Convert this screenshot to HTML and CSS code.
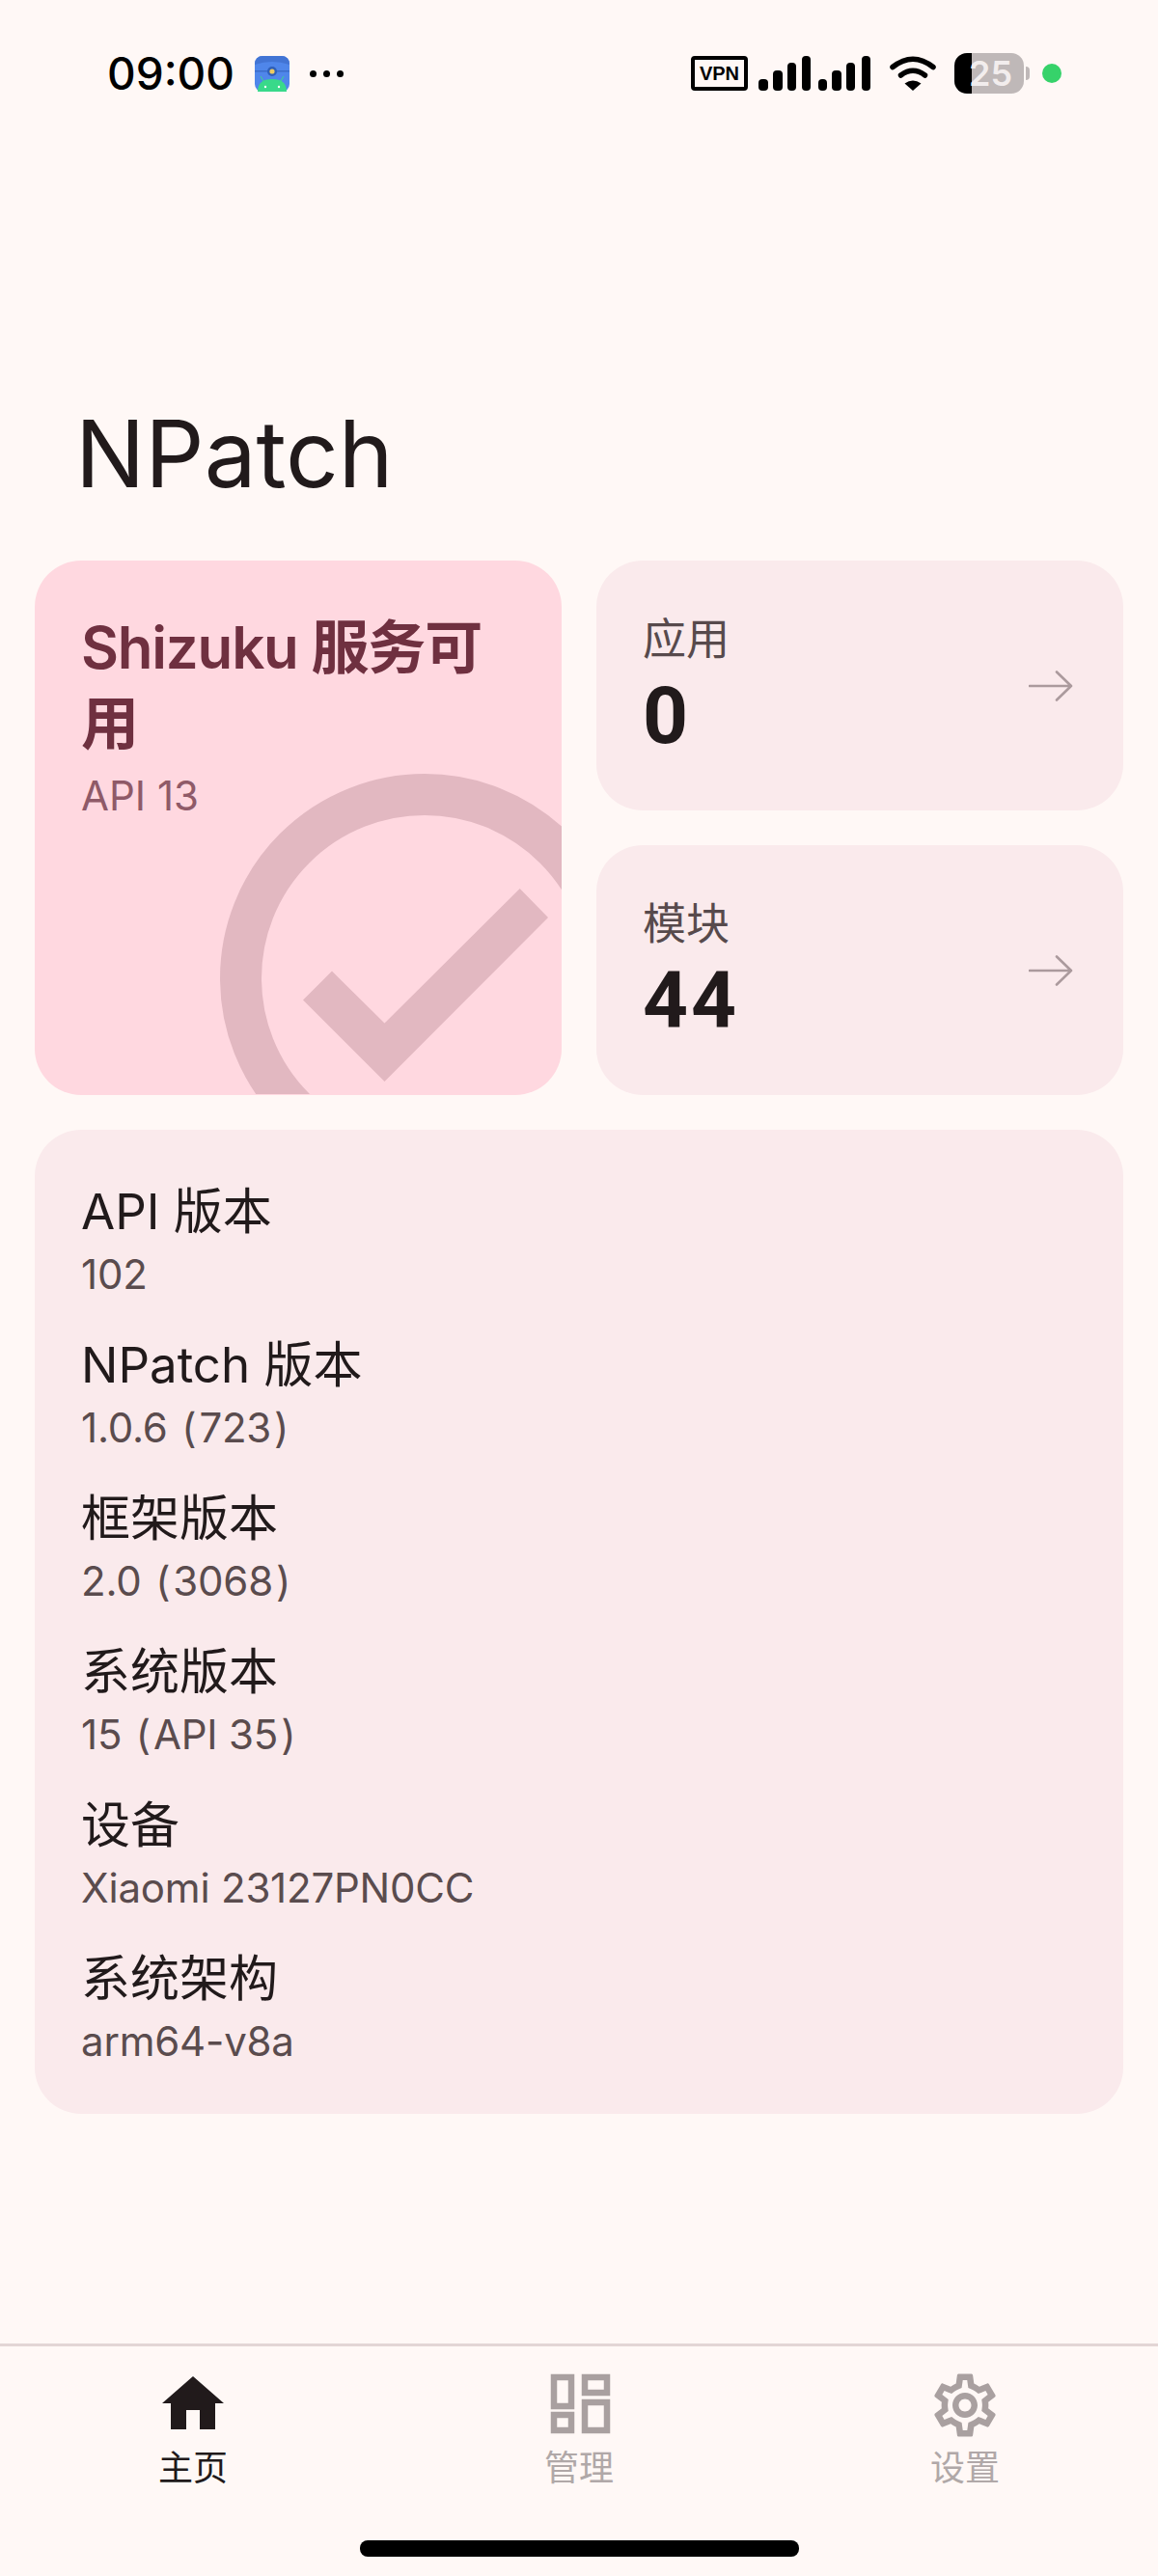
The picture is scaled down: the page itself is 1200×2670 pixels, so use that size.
FILE: index.html
```html
<!DOCTYPE html>
<html lang="zh-CN">
<head>
<meta charset="utf-8">
<title>NPatch</title>
<link rel="stylesheet" href="styles.css">
</head>
<body>
<div class="app">
  <header class="status">
    <div class="status-left">
      <span class="time">09:00</span>
      <svg class="app-icon" viewBox="0 0 36 37">
        <rect width="36" height="37" rx="8" fill="#4f86ea"/>
        <path d="M0 8a8 8 0 0 1 8-8h20a8 8 0 0 1 8 8v1q-18-6-36 0z" fill="#4274d4"/>
        <rect y="15" width="36" height="1.5" fill="#3c6cc8"/>
        <circle cx="18" cy="16" r="5" fill="#2f5fb8"/>
        <circle cx="18" cy="16" r="2.6" fill="#eccb62"/>
        <path d="M3 37q0-13 15-13t15 13z" fill="#39d98a"/>
        <path d="M9 26l-3-5M27 26l3-5" stroke="#39d98a" stroke-width="1"/>
        <circle cx="11" cy="32" r="1.2" fill="#fff"/><circle cx="25" cy="32" r="1.2" fill="#fff"/>
      </svg>
      <span class="dots"><i></i><i></i><i></i></span>
    </div>
    <div class="status-right">
      <span class="vpn">VPN</span>
      <svg class="signal" viewBox="0 0 116 36">
        <g fill="#000">
          <rect x="0" y="24" width="10" height="12" rx="4"/>
          <rect x="15" y="15" width="10" height="21" rx="4"/>
          <rect x="30" y="7" width="9" height="29" rx="4"/>
          <rect x="45" y="0" width="9" height="36" rx="4"/>
          <rect x="62" y="24" width="9" height="12" rx="4"/>
          <rect x="76" y="15" width="10" height="21" rx="4"/>
          <rect x="91" y="7" width="9" height="29" rx="4"/>
          <rect x="107" y="0" width="9" height="36" rx="4"/>
        </g>
      </svg>
      <svg class="wifi" viewBox="0 0 48 36">
        <g fill="none" stroke="#000" stroke-width="5.5" stroke-linecap="round">
          <path d="M3 11.5q21-16.500 42 0"/>
          <path d="M11.500 20q12.500-9.500 25 0"/>
        </g>
        <path d="M15.500 28.500q8.500-6 17 0l-8.500 7.500z" fill="#000"/>
      </svg>
      <div class="battery">
        <span class="battery-fill"></span>
        <span class="battery-num">25</span>
        <span class="battery-cap"></span>
      </div>
      <span class="privacy"></span>
    </div>
  </header>

  <h1 class="title">NPatch</h1>

  <main class="content">
    <section class="top">
      <article class="card-status">
        <svg class="check-bg" viewBox="0 0 546 553" preserveAspectRatio="none">
          <circle cx="404" cy="433" r="190.500" fill="none" stroke="#e2b8c1" stroke-width="43"/>
          <path d="M278 455.500L308 425.600L362.500 479.600L502.700 340L532 370L362.500 540z" fill="#e2b8c1"/>
        </svg>
        <h2 class="status-title">Shizuku 服务可用</h2>
        <p class="status-sub">API 13</p>
      </article>
      <div class="stats">
        <a class="stat">
          <div class="stat-text">
            <span class="stat-label">应用</span>
            <strong class="stat-num">0</strong>
          </div>
          <svg class="arrow" viewBox="0 0 46 32"><path d="M1 16H44M29 1.500L44 16L29 30.500" fill="none" stroke="#ab9a9d" stroke-width="2.600" stroke-linecap="round" stroke-linejoin="round"/></svg>
        </a>
        <a class="stat">
          <div class="stat-text">
            <span class="stat-label">模块</span>
            <strong class="stat-num">44</strong>
          </div>
          <svg class="arrow" viewBox="0 0 46 32"><path d="M1 16H44M29 1.500L44 16L29 30.500" fill="none" stroke="#ab9a9d" stroke-width="2.600" stroke-linecap="round" stroke-linejoin="round"/></svg>
        </a>
      </div>
    </section>

    <section class="info">
      <div class="info-row"><div class="info-key">API 版本</div><div class="info-val">102</div></div>
      <div class="info-row"><div class="info-key">NPatch 版本</div><div class="info-val">1.0.6 <span class="p">(</span>723<span class="p">)</span></div></div>
      <div class="info-row"><div class="info-key">框架版本</div><div class="info-val">2.0 <span class="p">(</span>3068<span class="p">)</span></div></div>
      <div class="info-row"><div class="info-key">系统版本</div><div class="info-val">15 <span class="p">(</span>API 35<span class="p">)</span></div></div>
      <div class="info-row"><div class="info-key">设备</div><div class="info-val">Xiaomi 23127PN0CC</div></div>
      <div class="info-row"><div class="info-key">系统架构</div><div class="info-val">arm64-v8a</div></div>
    </section>
  </main>

  <nav class="nav">
    <a class="nav-item active">
      <svg class="nav-icon" viewBox="0 0 66 66"><path d="M33 3L65 31H56V58H40V38H26V58H10V31H1z" fill="#211a1b"/></svg>
      <span>主页</span>
    </a>
    <a class="nav-item">
      <svg class="nav-icon" viewBox="0 0 66 66"><g fill="none" stroke="#a9a0a0" stroke-width="6.500"><rect x="7" y="4" width="18" height="30"/><rect x="39" y="4" width="23" height="16"/><rect x="7" y="43" width="18" height="16"/><rect x="39" y="30" width="23" height="29"/></g></svg>
      <span>管理</span>
    </a>
    <a class="nav-item">
      <svg class="nav-icon gear" viewBox="0 0 24 24"><path fill="#a9a0a0" d="M19.430 12.980c.04-.32.07-.64.07-.98 0-.34-.03-.66-.07-.98l2.110-1.650c.19-.15.24-.42.12-.64l-2-3.460c-.09-.16-.26-.25-.44-.25-.06 0-.12.01-.17.03l-2.490 1c-.52-.4-1.080-.73-1.690-.98l-.38-2.650C14.460 2.180 14.250 2 14 2h-4c-.25 0-.46.18-.49.42l-.38 2.650c-.61.25-1.170.59-1.690.98l-2.490-1c-.06-.02-.12-.03-.18-.03-.17 0-.34.09-.43.25l-2 3.460c-.13.22-.07.49.12.64l2.110 1.650c-.04.32-.07.65-.07.98 0 .33.03.66.07.98l-2.110 1.650c-.19.15-.24.42-.12.64l2 3.460c.09.16.26.25.44.25.06 0 .12-.01.17-.03l2.490-1c.52.4 1.080.73 1.690.98l.38 2.650c.03.24.24.42.49.42h4c.25 0 .46-.18.49-.42l.38-2.650c.61-.25 1.170-.59 1.690-.98l2.490 1c.06.02.12.03.18.03.17 0 .34-.09.43-.25l2-3.460c.12-.22.07-.49-.12-.64l-2.110-1.650zm-1.980-1.710c.04.31.05.52.05.73 0 .21-.02.43-.05.73l-.14 1.130.89.7 1.080.84-.7 1.210-1.270-.51-1.040-.42-.9.68c-.43.32-.84.56-1.250.73l-1.060.43-.16 1.130-.2 1.350h-1.400l-.19-1.350-.16-1.130-1.060-.43c-.43-.18-.83-.41-1.230-.71l-.91-.7-1.060.43-1.270.51-.7-1.210 1.080-.84.89-.7-.14-1.130c-.03-.31-.05-.54-.05-.74s.02-.43.05-.73l.14-1.130-.89-.7-1.080-.84.7-1.210 1.270.51 1.040.42.9-.68c.43-.32.84-.56 1.250-.73l1.060-.43.16-1.130.2-1.350h1.390l.19 1.350.16 1.130 1.060.43c.43.18.83.41 1.230.71l.91.7 1.060-.43 1.270-.51.7 1.210-1.070.85-.89.7.14 1.130zM12 8c-2.210 0-4 1.790-4 4s1.790 4 4 4 4-1.790 4-4-1.790-4-4-4zm0 6c-1.100 0-2-.9-2-2s.9-2 2-2 2 .9 2 2-.9 2-2 2z"/></svg>
      <span>设置</span>
    </a>
  </nav>
  <div class="gesture"><span class="gesture-bar"></span></div>
</div>
</body>
</html>
```
FILE: styles.css
```css
* { box-sizing: border-box; margin: 0; padding: 0; }
html, body { width: 1200px; height: 2670px; }
body {
  background: #fff8f6;
  color: #211a1b;
  font-family: Inter, "Noto Sans CJK SC", sans-serif;
  overflow: hidden;
}
.app { display: flex; flex-direction: column; height: 2670px; }

.status {
  display: flex;
  justify-content: space-between;
  align-items: center;
  height: 56px;
  margin-top: 48px;
  padding: 0 100px 0 111px;
}
.status-left, .status-right { display: flex; align-items: center; }
.time { font-size: 46px; font-weight: 500; color: #000; width: 153px; }
.app-icon { width: 36px; height: 37px; }
.dots { display: flex; gap: 7px; margin-left: 21px; }
.dots i { width: 7px; height: 7px; border-radius: 50%; background: #000; }
.vpn {
  width: 59px; height: 36px;
  border: 4px solid #000; border-radius: 4px;
  font: 700 20px/28px "Liberation Sans", sans-serif;
  text-align: center; color: #000;
}
.signal { width: 116px; height: 36px; margin-left: 11px; }
.wifi { width: 48px; height: 36px; margin-left: 20px; }
.battery {
  position: relative; width: 78px; height: 42px; margin-left: 19px;
  display: flex; align-items: center;
}
.battery-fill {
  width: 72px; height: 42px; border-radius: 13px;
  background: linear-gradient(90deg, #000 0 25%, #bfb8b8 25%);
}
.battery-num {
  position: absolute; left: 15px; top: 0;
  font: 600 36px/42px Inter, sans-serif; color: #f2eded;
}
.battery-cap { width: 4px; height: 14px; margin-left: 2px; border-radius: 0 4px 4px 0; background: #bfb8b8; }
.privacy { width: 20px; height: 20px; border-radius: 50%; background: #36d26a; margin-left: 13px; }

.title {
  margin: 308px 0 53px 0;
  padding: 0 0 0 78px;
  font-size: 96px; font-weight: 400; line-height: 116px;
  color: #211a1b;
}
.content { flex: 1; padding: 0 36px; }
.top { display: grid; grid-template-columns: 546px 546px; gap: 36px; }

.card-status {
  position: relative; overflow: hidden;
  height: 554px;
  background: #ffd8e0;
  border-radius: 48px;
  padding: 51px 48px;
}
.check-bg { position: absolute; left: 0; top: 0; width: 546px; height: 553px; }
.status-title {
  position: relative;
  font-size: 60px; font-weight: 600; line-height: 79px;
  letter-spacing: -1.2px;
  color: #6f3040;
}
.status-sub {
  position: relative;
  margin-top: 5px;
  font-size: 42px; line-height: 60px; color: #8f5a68;
}
.stats { display: flex; flex-direction: column; gap: 36px; }
.stat {
  flex: 1;
  display: flex; align-items: center; justify-content: space-between;
  background: #faeaec;
  border-radius: 48px;
  padding: 0 52px 0 48px;
}
.stat-text { display: flex; flex-direction: column; }
.stat-label { font-size: 45px; line-height: 60px; color: #574a4c; position: relative; bottom: 2px; }
.stat-num {
  margin-top: 2px;
  font-family: Roboto, sans-serif;
  font-size: 82px; font-weight: 700; line-height: 90px; letter-spacing: 3px; color: #211a1b;
}
.arrow { width: 46px; height: 32px; }

.info {
  margin-top: 36px;
  background: #faeaec;
  border-radius: 48px;
  padding: 49px 48px 47px;
  display: flex; flex-direction: column; gap: 30px;
}
.info-key { font-size: 51px; line-height: 72px; color: #211a1b; }
.info-val { font-size: 42px; line-height: 57px; letter-spacing: -0.2px; color: #5a4c4e; }
.p { margin: 0 3px; }

.nav {
  display: grid; grid-template-columns: repeat(3, 400px);
  height: 174px;
  border-top: 3px solid #e3d5d5;
  padding-top: 28px;
}
.nav-item {
  display: flex; flex-direction: column; align-items: center;
  font-size: 36px; line-height: 44px; color: #b0a8a8;
}
.nav-item.active { color: #211a1b; }
.nav-icon { width: 66px; height: 66px; margin-bottom: 10px; }
.gear { width: 78px; height: 78px; margin-top: -6px; margin-bottom: 4px; }
.gesture { height: 67px; display: flex; justify-content: center; padding-top: 30px; }
.gesture-bar { width: 455px; height: 17px; border-radius: 8px; background: #000; }
```
